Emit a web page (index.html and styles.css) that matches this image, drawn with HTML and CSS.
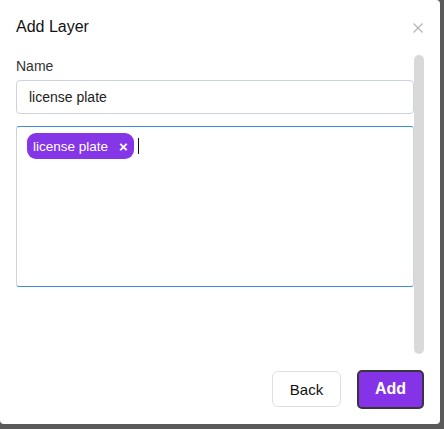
FILE: index.html
```html
<!DOCTYPE html>
<html>
<head>
<meta charset="utf-8">
<link rel="stylesheet" href="styles.css">
</head>
<body>
<div class="dialog">
  <div class="header">
    <div class="title">Add Layer</div>
    <svg class="close" width="10" height="10" viewBox="0 0 10 10"><path d="M0.5 0.5L9.5 9.5M9.5 0.5L0.5 9.5" stroke="#b3b3b3" stroke-width="1.1" fill="none"/></svg>
  </div>
  <div class="body">
    <div class="content">
      <div class="label">Name</div>
      <div class="input">license plate</div>
      <div class="tagbox">
        <span class="chip"><span class="chip-text">license plate</span><span class="chip-x">×</span></span>
        <span class="caret"></span>
      </div>
    </div>
    <div class="scrollbar"></div>
  </div>
  <div class="footer">
    <button class="btn back">Back</button>
    <button class="btn add">Add</button>
  </div>
</div>
</body>
</html>
```
FILE: styles.css
```css
html, body {
  margin: 0;
  padding: 0;
  background: #5a5a5a;
  font-family: "Liberation Sans", Arial, sans-serif;
}
.dialog {
  width: 440px;
  height: 424px;
  background: #fff;
  border-radius: 0 4px 4px 4px;
  display: flex;
  flex-direction: column;
}
.header {
  display: flex;
  align-items: center;
  justify-content: space-between;
  padding: 17px 17px 0 16px;
  height: 20px;
}
.title {
  font-size: 16px;
  line-height: 20px;
  color: #111;
}
.close {
  display: block;
  margin-top: 1px;
}
.body {
  margin-top: 17px;
  height: 300px;
  display: flex;
  padding-left: 16px;
  padding-right: 16px;
}
.content {
  width: 398px;
  padding-top: 4px;
}
.label {
  font-size: 14px;
  line-height: 17px;
  color: #333;
}
.input {
  margin-top: 5px;
  height: 32px;
  border: 1px solid #cdd3dc;
  border-radius: 4px;
  padding-left: 12px;
  font-size: 14px;
  line-height: 32px;
  color: #222;
}
.tagbox {
  margin-top: 12px;
  height: 147px;
  border: 1px solid #cdd3dc;
  border-top-color: #3d8ee6;
  border-bottom-color: #3d8ee6;
  border-radius: 3px;
  padding: 6px 10px;
  display: flex;
  align-items: flex-start;
}
.chip {
  display: inline-flex;
  align-items: center;
  height: 26px;
  width: 107px;
  box-sizing: border-box;
  background: #8536e6;
  border-radius: 9px;
  padding-left: 6px;
  color: #fff;
  font-size: 13.5px;
}
.chip-text {
  width: 86px;
}
.chip-x {
  font-weight: bold;
  font-size: 15px;
  line-height: 15px;
}
.caret {
  display: block;
  width: 1px;
  height: 16px;
  background: #111;
  margin-left: 4px;
  margin-top: 5px;
}
.scrollbar {
  width: 10px;
  height: 299px;
  margin-top: 1px;
  background: #d9d9d9;
  border-radius: 5px;
}
.footer {
  flex: 1;
  display: flex;
  justify-content: flex-end;
  align-items: center;
  gap: 16px;
  padding-right: 16px;
}
.btn {
  font-family: "Liberation Sans", Arial, sans-serif;
  cursor: pointer;
  margin: 0;
}
.back {
  width: 69px;
  height: 36px;
  background: #fff;
  border: 1px solid #e0e0e0;
  border-radius: 6px;
  font-size: 15px;
  color: #111;
  padding: 0;
}
.add {
  width: 67px;
  height: 39px;
  background: #8434e6;
  border: 2px solid #3a3340;
  border-radius: 5px;
  font-size: 16px;
  font-weight: bold;
  color: #fff;
  padding: 0;
}
```
